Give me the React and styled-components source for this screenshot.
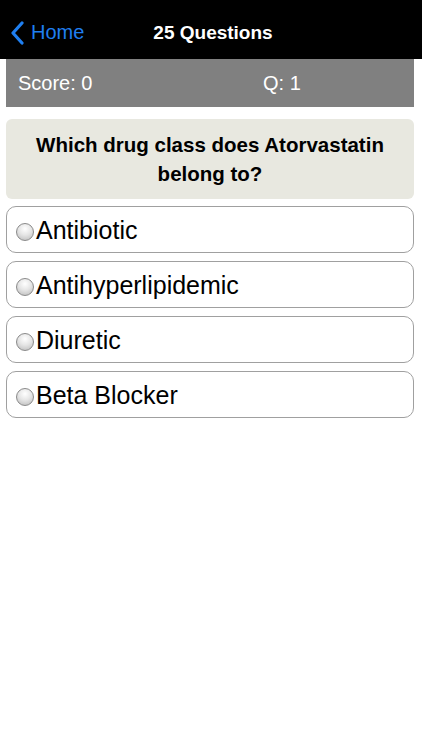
import React from 'react';
import styled, { createGlobalStyle } from 'styled-components';

const GlobalStyle = createGlobalStyle`
  html, body {
    margin: 0;
    padding: 0;
    background: #ffffff;
    font-family: "Liberation Sans", Arial, sans-serif;
  }
  * {
    box-sizing: border-box;
  }
`;

const Screen = styled.div`
  width: 422px;
  min-height: 750px;
  background: #ffffff;
`;

const NavBar = styled.div`
  position: relative;
  height: 59px;
  padding-top: 6px;
  background: #000000;
  display: flex;
  align-items: center;
  justify-content: center;
`;

const BackButton = styled.div`
  position: absolute;
  left: 10px;
  top: 6px;
  bottom: 0;
  display: flex;
  align-items: center;
  gap: 7px;
  color: #1f7ff0;
  font-size: 20px;
`;

const Title = styled.div`
  color: #ffffff;
  font-size: 19px;
  font-weight: bold;
  margin-left: 4px;
`;

const Content = styled.div`
  padding: 0 8px 0 6px;
  display: flex;
  flex-direction: column;
`;

const ScoreBar = styled.div`
  height: 48px;
  background: #808080;
  display: flex;
  align-items: center;
  color: #ffffff;
  font-size: 20px;
  padding-left: 12px;
`;

const ScoreItem = styled.span`
  width: ${p => p.$width || 'auto'};
`;

const QuestionBox = styled.div`
  margin-top: 12px;
  background: #e8e8e0;
  border-radius: 6px;
  height: 80px;
  display: flex;
  align-items: center;
  justify-content: center;
  text-align: center;
  font-size: 20.5px;
  font-weight: bold;
  line-height: 29px;
  color: #000000;
  padding: 0 16px;
`;

const Options = styled.div`
  margin-top: 7px;
  display: flex;
  flex-direction: column;
  gap: 8px;
`;

const Option = styled.div`
  height: 47px;
  border: 1px solid #a0a0a0;
  border-radius: 10px;
  display: flex;
  align-items: center;
  padding-left: 9px;
  padding-top: 1px;
  font-size: 25px;
  color: #000000;
`;

const Radio = styled.span`
  width: 18px;
  height: 18px;
  border-radius: 50%;
  border: 1px solid #8a8a8a;
  background: radial-gradient(circle at 50% 30%, #ffffff 0%, #e6e6e6 45%, #b8b8b8 100%);
  margin-right: 2px;
  margin-top: 3px;
  flex-shrink: 0;
`;

const Chevron = () => (
  <svg width="14" height="24" viewBox="0 0 14 24">
    <path d="M12 2 L3 12 L12 22" fill="none" stroke="#1f7ff0" strokeWidth="3.2" strokeLinecap="round" strokeLinejoin="round" />
  </svg>
);

const answers = ['Antibiotic', 'Antihyperlipidemic', 'Diuretic', 'Beta Blocker'];

export default function App() {
  return (
    <Screen>
      <GlobalStyle />
      <NavBar>
        <BackButton>
          <Chevron />
          <span>Home</span>
        </BackButton>
        <Title>25 Questions</Title>
      </NavBar>
      <Content>
        <ScoreBar>
          <ScoreItem $width="245px">Score: 0</ScoreItem>
          <ScoreItem>Q: 1</ScoreItem>
        </ScoreBar>
        <QuestionBox>Which drug class does Atorvastatin belong to?</QuestionBox>
        <Options>
          {answers.map(a => (
            <Option key={a}>
              <Radio />
              {a}
            </Option>
          ))}
        </Options>
      </Content>
    </Screen>
  );
}
